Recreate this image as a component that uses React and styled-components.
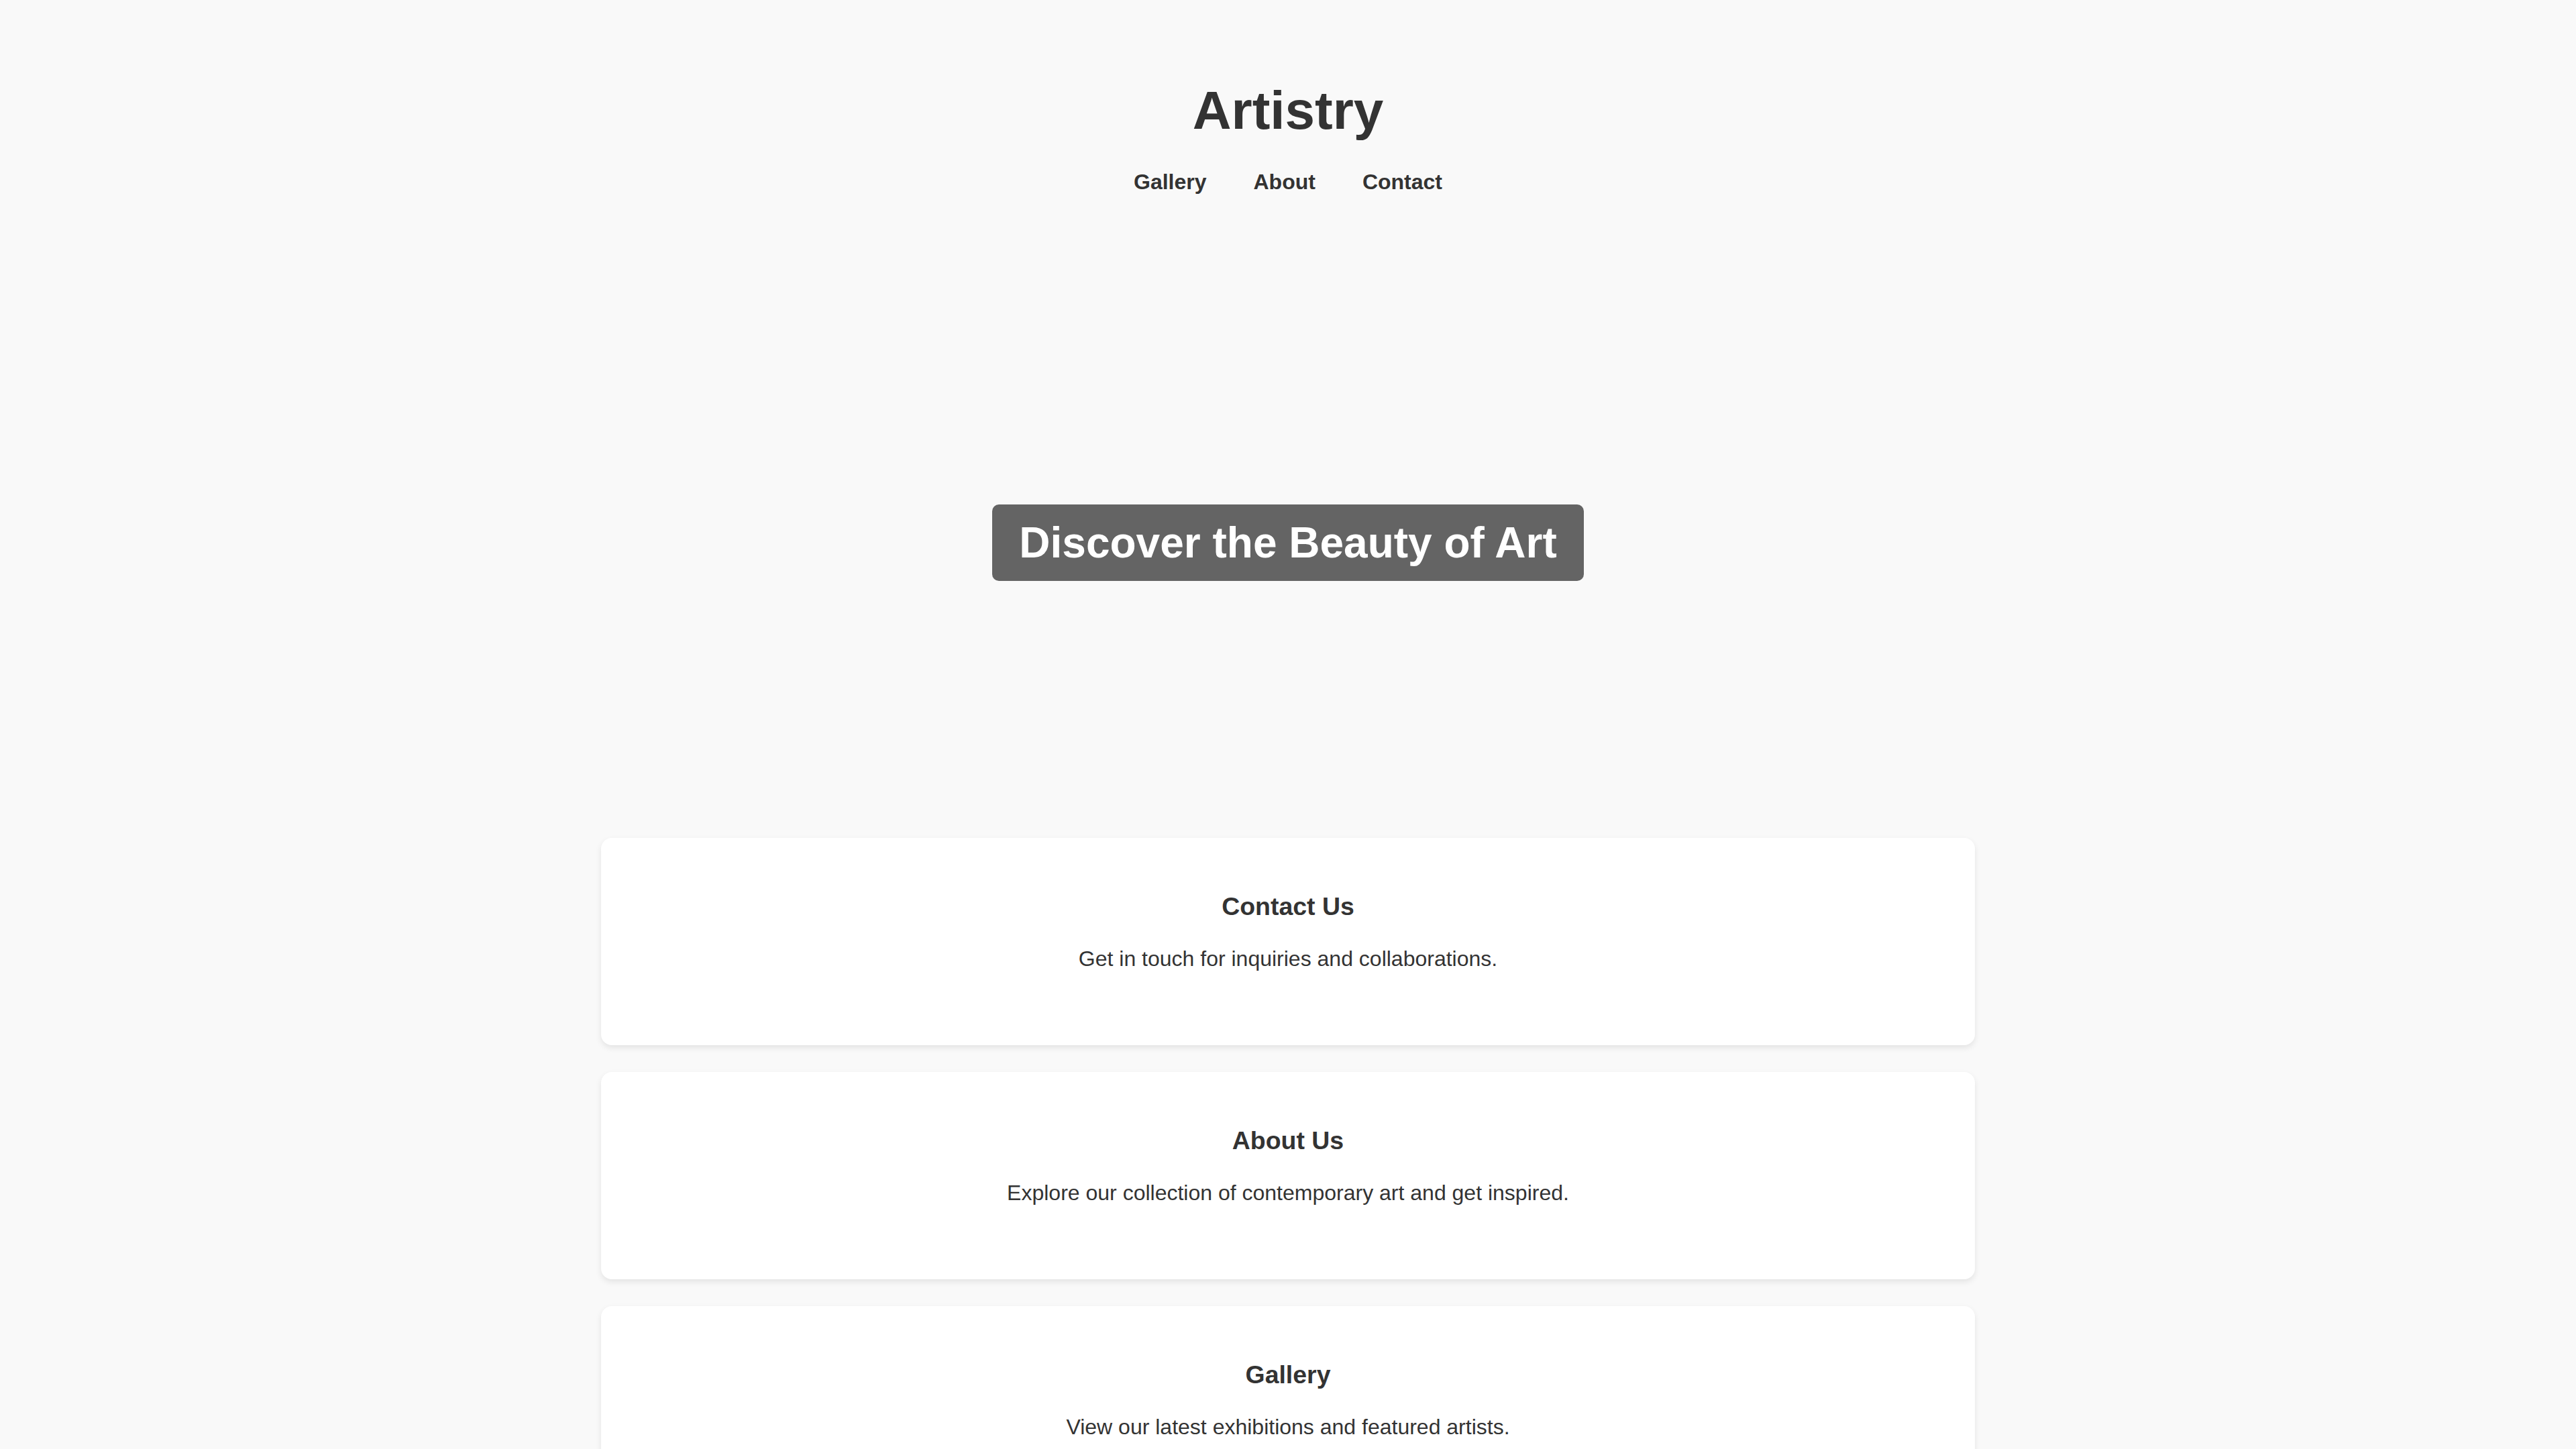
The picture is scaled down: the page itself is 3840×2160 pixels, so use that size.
import styled, { createGlobalStyle } from 'styled-components';

const navLinks = ['Gallery', 'About', 'Contact'];

const sections = [
  { title: 'Contact Us', text: 'Get in touch for inquiries and collaborations.' },
  { title: 'About Us', text: 'Explore our collection of contemporary art and get inspired.' },
  { title: 'Gallery', text: 'View our latest exhibitions and featured artists.' },
];

const GlobalStyle = createGlobalStyle`
  html, body {
    margin: 0;
    padding: 0;
    background-color: #f9f9f9;
  }
  body {
    font-family: "Liberation Sans", Arial, sans-serif;
    color: #333;
  }
`;

const Page = styled.div`
  min-height: 100vh;
  background-color: #f9f9f9;
`;

const Header = styled.header`
  display: flex;
  flex-direction: column;
  align-items: center;
  padding: 120px 0 119px;
`;

const Logo = styled.h1`
  margin: 0;
  font-size: 80px;
  line-height: 90px;
  font-weight: 700;
  color: #333;
`;

const Nav = styled.nav`
  display: flex;
  gap: 70px;
  margin-top: 43px;
`;

const NavLink = styled.a`
  font-size: 32px;
  line-height: 37px;
  font-weight: 700;
  color: #333;
  text-decoration: none;
  cursor: pointer;
`;

const Hero = styled.section`
  height: 800px;
  display: flex;
  align-items: center;
  justify-content: center;
`;

const HeroTitle = styled.h2`
  margin: 0;
  padding: 20px 40px;
  font-size: 64px;
  line-height: 74px;
  font-weight: 700;
  color: #fff;
  background-color: rgba(0, 0, 0, 0.6);
  border-radius: 10px;
`;

const Sections = styled.main`
  display: flex;
  flex-direction: column;
  align-items: center;
  gap: 40px;
  padding: 40px 0 80px;
`;

const Card = styled.section`
  width: 2048px;
  box-sizing: border-box;
  padding: 44px 40px 79px;
  background-color: #fff;
  border-radius: 16px;
  box-shadow: 0 4px 10px rgba(0, 0, 0, 0.09);
  text-align: center;
`;

const CardTitle = styled.h3`
  margin: 37px 0 39px;
  font-size: 37.44px;
  line-height: 42px;
  font-weight: 700;
  color: #333;
`;

const CardText = styled.p`
  margin: 0 0 32px;
  font-size: 32px;
  line-height: 36px;
  color: #333;
`;

export default function App() {
  return (
    <Page>
      <GlobalStyle />
      <Header>
        <Logo>Artistry</Logo>
        <Nav>
          {navLinks.map((link) => (
            <NavLink key={link} href={`#${link.toLowerCase()}`}>
              {link}
            </NavLink>
          ))}
        </Nav>
      </Header>

      <Hero>
        <HeroTitle>Discover the Beauty of Art</HeroTitle>
      </Hero>

      <Sections>
        {sections.map((s) => (
          <Card key={s.title}>
            <CardTitle>{s.title}</CardTitle>
            <CardText>{s.text}</CardText>
          </Card>
        ))}
      </Sections>
    </Page>
  );
}
